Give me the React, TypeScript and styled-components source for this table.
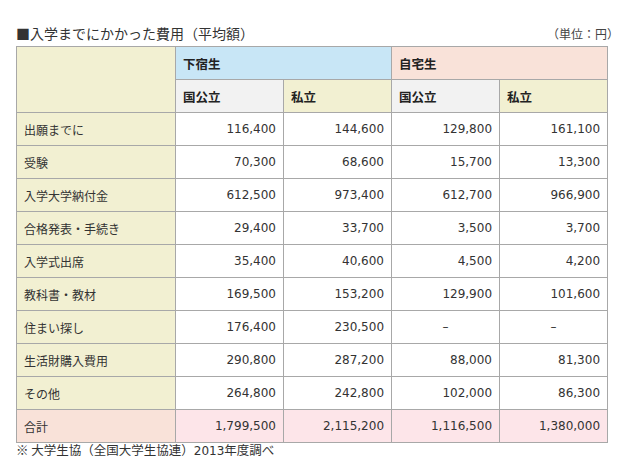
import React from "react";
import styled, { createGlobalStyle } from "styled-components";

const Global = createGlobalStyle`
  html, body { margin: 0; padding: 0; background: #ffffff; }
  body { font-family: "Noto Sans CJK JP", "Noto Sans", sans-serif; color: #333333; }
`;

const Page = styled.div`
  width: 597px;
  padding: 23px 0 0 16px;
`;

const TitleBar = styled.div`
  display: flex;
  justify-content: space-between;
  align-items: flex-end;
  height: 20px;
  margin-bottom: 3px;
`;

const Title = styled.h1`
  margin: 0;
  font-size: 14px;
  font-weight: normal;
  line-height: 20px;
  color: #333333;
`;

const Unit = styled.span`
  font-size: 12px;
  line-height: 18px;
  color: #444444;
  margin-right: -6px;
`;

const Table = styled.table`
  border-collapse: collapse;
  table-layout: fixed;
  width: 591px;
  font-size: 12px;
`;

type Tone = "label" | "blue" | "home" | "gray" | "beige" | "white" | "total" | "totalLabel";

const bg: Record<Tone, string> = {
  label: "#f2f0d2",
  blue: "#c8e6f6",
  home: "#f9e2d9",
  gray: "#f2f2f2",
  beige: "#f2f0d2",
  white: "#ffffff",
  total: "#fde5e9",
  totalLabel: "#f9e2d9",
};

const HeadCell = styled.th<{ $tone: Tone }>`
  background: ${(p) => bg[p.$tone]};
  border: 1px solid #a8a8a8;
  height: 32px;
  padding: 0 7px;
  text-align: left;
  font-weight: bold;
  font-size: 12.5px;
  color: #222222;
`;

const LabelCell = styled.td<{ $tone: Tone }>`
  background: ${(p) => bg[p.$tone]};
  border: 1px solid #a8a8a8;
  height: 32px;
  padding: 0 7px;
  text-align: left;
  color: #333333;
`;

const NumCell = styled.td<{ $tone: Tone; $dash?: boolean }>`
  background: ${(p) => bg[p.$tone]};
  border: 1px solid #a8a8a8;
  height: 32px;
  padding: ${(p) => (p.$dash ? "0" : "0 7px")};
  text-align: ${(p) => (p.$dash ? "center" : "right")};
  font-family: "DejaVu Sans", Verdana, sans-serif;
  font-size: 12px;
  color: #333333;
`;

const Note = styled.p`
  margin: 0;
  font-size: 12.5px;
  line-height: 14px;
  color: #333333;
`;

const NoteNum = styled.span`
  font-family: "DejaVu Sans", Verdana, sans-serif;
  font-size: 12px;
`;

const rows: [string, string[]][] = [
  ["出願までに", ["116,400", "144,600", "129,800", "161,100"]],
  ["受験", ["70,300", "68,600", "15,700", "13,300"]],
  ["入学大学納付金", ["612,500", "973,400", "612,700", "966,900"]],
  ["合格発表・手続き", ["29,400", "33,700", "3,500", "3,700"]],
  ["入学式出席", ["35,400", "40,600", "4,500", "4,200"]],
  ["教科書・教材", ["169,500", "153,200", "129,900", "101,600"]],
  ["住まい探し", ["176,400", "230,500", "–", "–"]],
  ["生活財購入費用", ["290,800", "287,200", "88,000", "81,300"]],
  ["その他", ["264,800", "242,800", "102,000", "86,300"]],
];

const total: string[] = ["1,799,500", "2,115,200", "1,116,500", "1,380,000"];

export default function App() {
  return (
    <>
      <Global />
      <Page>
        <TitleBar>
          <Title>■入学までにかかった費用（平均額）</Title>
          <Unit>（単位：円）</Unit>
        </TitleBar>
        <Table>
          <colgroup>
            <col style={{ width: 159 }} />
            <col style={{ width: 108 }} />
            <col style={{ width: 108 }} />
            <col style={{ width: 108 }} />
            <col style={{ width: 108 }} />
          </colgroup>
          <thead>
            <tr>
              <HeadCell $tone="label" rowSpan={2} />
              <HeadCell $tone="blue" colSpan={2}>下宿生</HeadCell>
              <HeadCell $tone="home" colSpan={2}>自宅生</HeadCell>
            </tr>
            <tr>
              <HeadCell $tone="gray">国公立</HeadCell>
              <HeadCell $tone="beige">私立</HeadCell>
              <HeadCell $tone="gray">国公立</HeadCell>
              <HeadCell $tone="beige">私立</HeadCell>
            </tr>
          </thead>
          <tbody>
            {rows.map(([label, vals]) => (
              <tr key={label}>
                <LabelCell $tone="label">{label}</LabelCell>
                {vals.map((v, i) => (
                  <NumCell key={i} $tone="white" $dash={v === "–"}>
                    {v}
                  </NumCell>
                ))}
              </tr>
            ))}
            <tr>
              <LabelCell $tone="totalLabel">合計</LabelCell>
              {total.map((v, i) => (
                <NumCell key={i} $tone="total">
                  {v}
                </NumCell>
              ))}
            </tr>
          </tbody>
        </Table>
        <Note>
          ※ 大学生協（全国大学生協連）<NoteNum>2013</NoteNum>年度調べ
        </Note>
      </Page>
    </>
  );
}
